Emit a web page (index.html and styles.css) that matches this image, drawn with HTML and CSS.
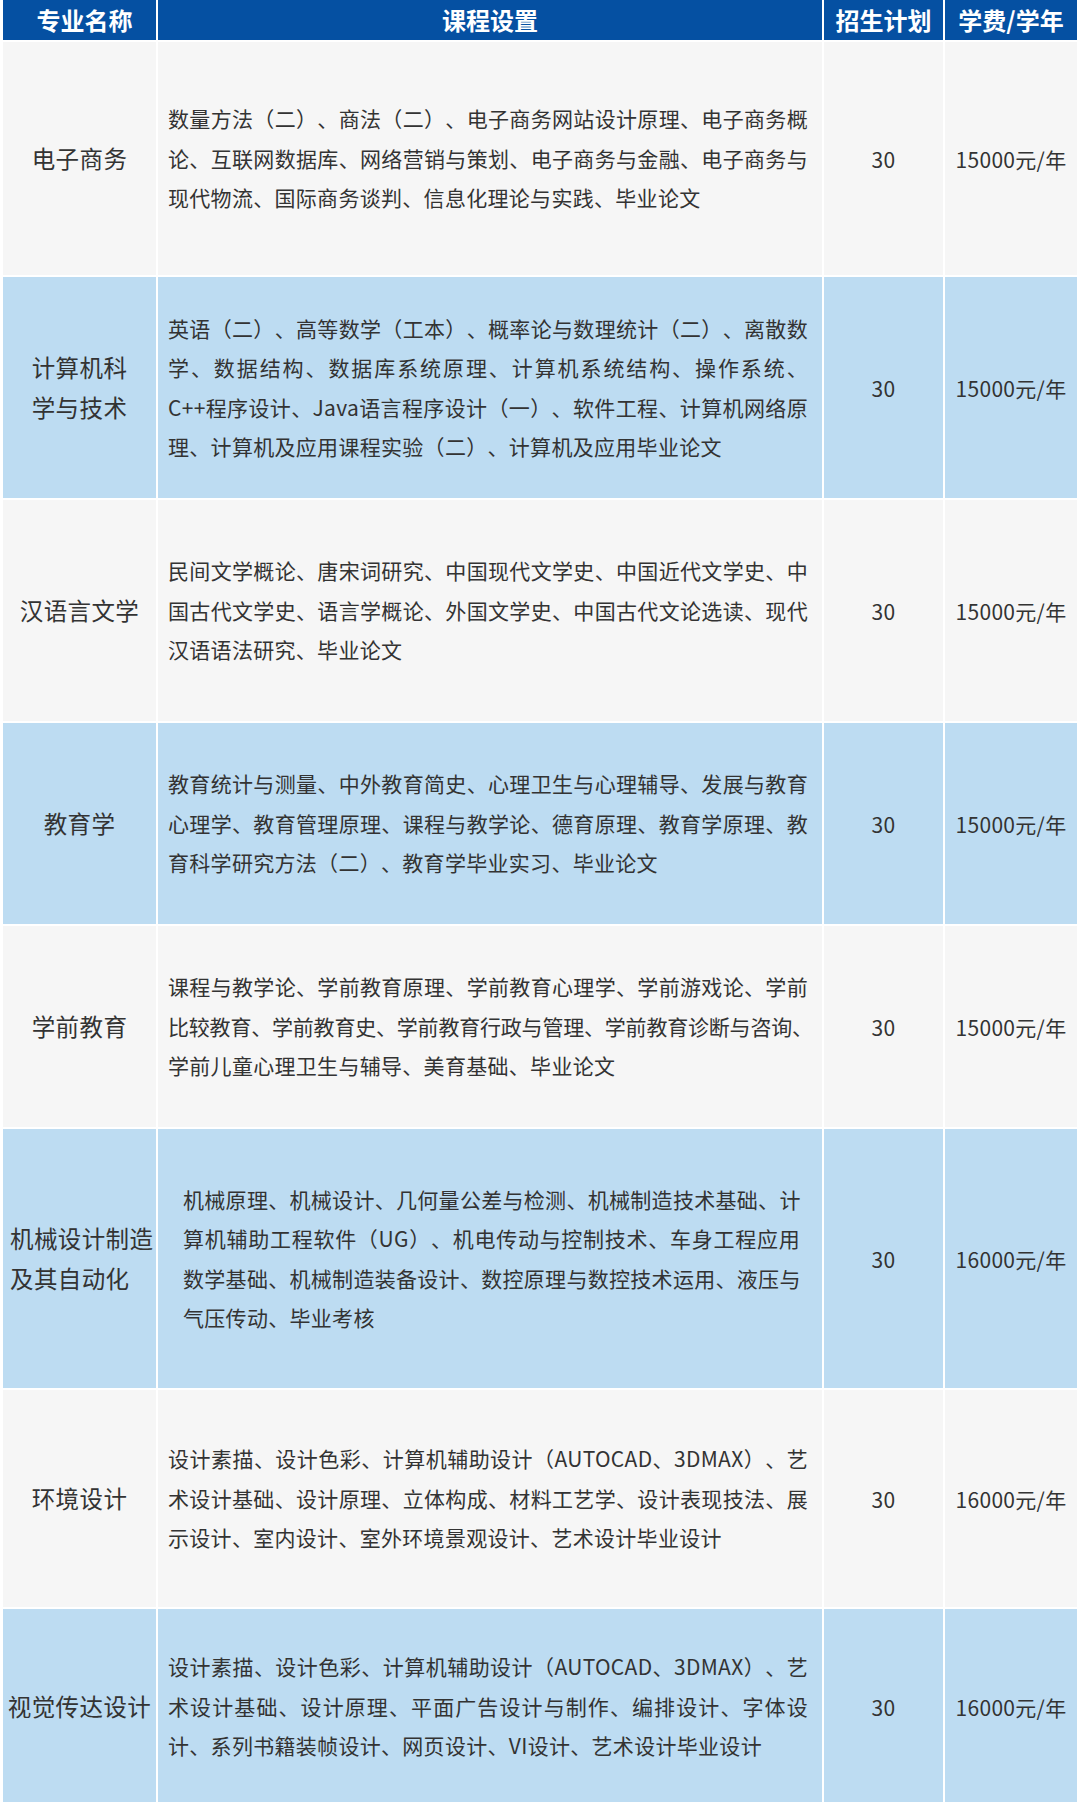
FILE: index.html
```html
<!DOCTYPE html>
<html lang="zh-CN">
<head>
<meta charset="utf-8">
<title>专业设置</title>
<link rel="stylesheet" href="styles.css">
</head>
<body>
<table class="plan">
  <colgroup>
    <col class="c-name">
    <col class="c-course">
    <col class="c-num">
    <col class="c-fee">
  </colgroup>
  <thead>
    <tr class="head">
      <th class="h-name">专业名称</th>
      <th>课程设置</th>
      <th>招生计划</th>
      <th>学费/学年</th>
    </tr>
  </thead>
  <tbody>
    <tr class="gray r1">
      <td class="name">电子商务</td>
      <td class="course"><div class="txt">
        <span class="ln">数量方法（二）、商法（二）、电子商务网站设计原理、电子商务概</span>
        <span class="ln">论、互联网数据库、网络营销与策划、电子商务与金融、电子商务与</span>
        <span class="ln">现代物流、国际商务谈判、信息化理论与实践、毕业论文</span>
      </div></td>
      <td class="num">30</td>
      <td class="fee">15000元/年</td>
    </tr>
    <tr class="blue r2">
      <td class="name">计算机科<br>学与技术</td>
      <td class="course"><div class="txt">
        <span class="ln">英语（二）、高等数学（工本）、概率论与数理统计（二）、离散数</span>
        <span class="ln">学、数据结构、数据库系统原理、计算机系统结构、操作系统、</span>
        <span class="ln">C++程序设计、Java语言程序设计（一）、软件工程、计算机网络原</span>
        <span class="ln">理、计算机及应用课程实验（二）、计算机及应用毕业论文</span>
      </div></td>
      <td class="num">30</td>
      <td class="fee">15000元/年</td>
    </tr>
    <tr class="gray r3">
      <td class="name">汉语言文学</td>
      <td class="course"><div class="txt">
        <span class="ln">民间文学概论、唐宋词研究、中国现代文学史、中国近代文学史、中</span>
        <span class="ln">国古代文学史、语言学概论、外国文学史、中国古代文论选读、现代</span>
        <span class="ln">汉语语法研究、毕业论文</span>
      </div></td>
      <td class="num">30</td>
      <td class="fee">15000元/年</td>
    </tr>
    <tr class="blue r4">
      <td class="name">教育学</td>
      <td class="course"><div class="txt">
        <span class="ln">教育统计与测量、中外教育简史、心理卫生与心理辅导、发展与教育</span>
        <span class="ln">心理学、教育管理原理、课程与教学论、德育原理、教育学原理、教</span>
        <span class="ln">育科学研究方法（二）、教育学毕业实习、毕业论文</span>
      </div></td>
      <td class="num">30</td>
      <td class="fee">15000元/年</td>
    </tr>
    <tr class="gray r5">
      <td class="name">学前教育</td>
      <td class="course"><div class="txt">
        <span class="ln">课程与教学论、学前教育原理、学前教育心理学、学前游戏论、学前</span>
        <span class="ln tight">比较教育、学前教育史、学前教育行政与管理、学前教育诊断与咨询、</span>
        <span class="ln">学前儿童心理卫生与辅导、美育基础、毕业论文</span>
      </div></td>
      <td class="num">30</td>
      <td class="fee">15000元/年</td>
    </tr>
    <tr class="blue r6">
      <td class="name left">机械设计制造<br>及其自动化</td>
      <td class="course"><div class="txt inset">
        <span class="ln">机械原理、机械设计、几何量公差与检测、机械制造技术基础、计</span>
        <span class="ln">算机辅助工程软件（UG）、机电传动与控制技术、车身工程应用</span>
        <span class="ln">数学基础、机械制造装备设计、数控原理与数控技术运用、液压与</span>
        <span class="ln">气压传动、毕业考核</span>
      </div></td>
      <td class="num">30</td>
      <td class="fee">16000元/年</td>
    </tr>
    <tr class="gray r7">
      <td class="name">环境设计</td>
      <td class="course"><div class="txt">
        <span class="ln">设计素描、设计色彩、计算机辅助设计（AUTOCAD、3DMAX）、艺</span>
        <span class="ln">术设计基础、设计原理、立体构成、材料工艺学、设计表现技法、展</span>
        <span class="ln">示设计、室内设计、室外环境景观设计、艺术设计毕业设计</span>
      </div></td>
      <td class="num">30</td>
      <td class="fee">16000元/年</td>
    </tr>
    <tr class="blue r8">
      <td class="name">视觉传达设计</td>
      <td class="course"><div class="txt">
        <span class="ln">设计素描、设计色彩、计算机辅助设计（AUTOCAD、3DMAX）、艺</span>
        <span class="ln">术设计基础、设计原理、平面广告设计与制作、编排设计、字体设</span>
        <span class="ln">计、系列书籍装帧设计、网页设计、VI设计、艺术设计毕业设计</span>
      </div></td>
      <td class="num">30</td>
      <td class="fee">16000元/年</td>
    </tr>
  </tbody>
</table>
</body>
</html>
```

FILE: styles.css
```css
html, body {
  margin: 0;
  padding: 0;
  background: #ffffff;
}

body {
  font-family: "Noto Sans CJK SC", "Noto Sans", sans-serif;
  color: #333333;
  text-spacing-trim: space-all;
}

.plan {
  table-layout: fixed;
  border-collapse: separate;
  border-spacing: 2px;
  width: 1078px;
  margin: -2px 0 0 1px;
}

.c-name { width: 153px; }
.c-course { width: 664px; }
.c-num { width: 119px; }
.c-fee { width: 132px; }

.plan th,
.plan td {
  padding: 0;
  vertical-align: middle;
}

.head th {
  height: 40px;
  background: #0550a2;
  color: #ffffff;
  font-size: 24px;
  font-weight: 700;
  line-height: 40px;
  text-align: center;
}

.head th.h-name {
  padding-left: 10px;
}

.gray td { background: #f6f6f6; }
.blue td { background: #bddcf2; }

.r1 td { height: 233px; }
.r2 td { height: 221px; }
.r3 td { height: 221px; }
.r4 td { height: 201px; }
.r5 td { height: 201px; }
.r6 td { height: 259px; }
.r7 td { height: 217px; }
.r8 td { height: 195px; }

.name {
  font-size: 23.5px;
  letter-spacing: 0.4px;
  line-height: 39.4px;
  text-align: center;
}

.name.left {
  text-align: left;
  padding-left: 7px;
}

.num,
.fee {
  font-size: 21px;
  letter-spacing: 0.3px;
  text-align: center;
}

.txt {
  padding: 0 14px 0 10px;
  font-size: 21px;
  letter-spacing: 0.3px;
  line-height: 39.4px;
}

.txt.inset {
  padding: 0 22px 0 25px;
}

.ln {
  display: block;
  white-space: nowrap;
  text-align: justify;
  text-align-last: justify;
}

.ln:last-child {
  text-align-last: left;
}

.ln.tight {
  letter-spacing: -0.2px;
}
```
